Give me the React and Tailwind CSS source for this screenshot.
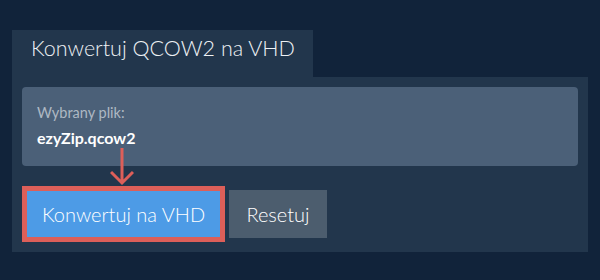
export default function App() {
  return (
    <div className="w-[600px] h-[280px] bg-[#11233a] pt-[30px] pl-[12px]" style={{ fontFamily: 'Lato, "Noto Sans", sans-serif' }}>
      <div className="w-[301px] h-[47px] bg-[#22364c] pl-[19px] pt-[8px]">
        <div className="whitespace-nowrap text-[21.5px] font-light text-[#eef1f4] leading-none">Konwertuj QCOW2 na VHD</div>
      </div>
      <div className="relative w-[576px] h-[175px] bg-[#22364c] pt-[10px] px-[10px]">
        <div className="h-[79px] rounded-[4px] bg-[#4b6078] pl-[15px] pt-[18px]">
          <div className="text-[14.5px] leading-[16px] text-[#aeb8c3]">Wybrany plik:</div>
          <div className="mt-[8px] text-[16px] leading-[18px] font-bold text-white">ezyZip.qcow2</div>
        </div>
        <div className="mt-[20px] flex items-center gap-[4px]">
          <div className="w-[203px] h-[56px] border-[5px] border-[#dd5f59] bg-[#4d9be6] flex items-center justify-center">
            <span className="whitespace-nowrap text-[20px] font-light text-white leading-none">Konwertuj na VHD</span>
          </div>
          <div className="w-[98px] h-[48px] bg-[#4c5d6e] flex items-center justify-center">
            <span className="whitespace-nowrap text-[20px] font-light text-white leading-none">Resetuj</span>
          </div>
        </div>
        <svg className="absolute left-[98px] top-[71px]" width="24" height="38" viewBox="0 0 24 38" fill="none">
          <path d="M12 0 V35 M1 24 L12 35 L23 24" stroke="#dd5f59" strokeWidth="3" />
        </svg>
      </div>
    </div>
  );
}
